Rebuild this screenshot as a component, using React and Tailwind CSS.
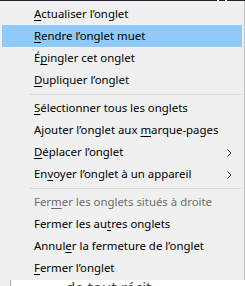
import React from "react";

const items = [
  { pre: "", key: "A", post: "ctualiser l’onglet" },
  { pre: "", key: "R", post: "endre l’onglet muet", active: true },
  { pre: "É", key: "p", post: "ingler cet onglet" },
  { pre: "", key: "D", post: "upliquer l’onglet" },
  "sep",
  { pre: "", key: "S", post: "électionner tous les onglets" },
  { pre: "Ajouter l’onglet aux ", key: "m", post: "arque-pages" },
  { pre: "", key: "D", post: "éplacer l’onglet", sub: true },
  { pre: "En", key: "v", post: "oyer l’onglet à un appareil", sub: true },
  "sep",
  { pre: "Fer", key: "m", post: "er les onglets situés à droite", disabled: true },
  { pre: "Fermer les au", key: "t", post: "res onglets" },
  { pre: "Annul", key: "e", post: "r la fermeture de l’onglet" },
  { pre: "", key: "F", post: "ermer l’onglet" },
];

function Chevron() {
  return (
    <svg width="5" height="8" viewBox="0 0 5 8" className="absolute right-[10px] top-[8px]">
      <path d="M0.5 0.5 L4 4 L0.5 7.5" fill="none" stroke="#333" strokeWidth="1" />
    </svg>
  );
}

function MenuItem({ item }) {
  const color = item.disabled ? "text-[#6d6d6d]" : "text-black";
  return (
    <div
      className={`relative h-[22px] flex items-center pl-[32px] ${color} ${
        item.active ? "bg-[#91c9f7]" : ""
      }`}
    >
      <span className="whitespace-nowrap">
        {item.pre}
        <span className="underline underline-offset-[2px]">{item.key}</span>
        {item.post}
      </span>
      {item.sub && <Chevron />}
    </div>
  );
}

export default function App() {
  return (
    <div
      className="w-[245px] h-[286px] overflow-hidden bg-white flex flex-col"
      style={{ fontFamily: '"Noto Sans", "Open Sans", sans-serif' }}
    >
      <div className="h-[1px] bg-[#1c2030] flex shrink-0">
        <div className="ml-[217px] w-[2px] bg-white" />
        <div className="ml-[6px] w-[2px] bg-white" />
      </div>
      <div className="bg-[#f0f0f0] border-r border-[#c4c4c4] pl-[2px] pr-[2px] pt-[2px] pb-[1px] text-[11.4px] leading-none shrink-0">
        {items.map((item, i) =>
          item === "sep" ? (
            <div key={i} className="h-[6px] flex items-center pl-[28px]">
              <div className="h-[1px] w-full bg-[#d7d7d7]" />
            </div>
          ) : (
            <MenuItem key={i} item={item} />
          )
        )}
      </div>
      <div className="flex flex-1">
        <div className="w-[11px] bg-[#f0f0f0] border-r border-[#a8a8a8]" />
        <div className="flex-1 pl-[55px] pt-[0px] text-[15px] leading-[14px] text-[#444]">
          de tout récit
        </div>
      </div>
    </div>
  );
}
